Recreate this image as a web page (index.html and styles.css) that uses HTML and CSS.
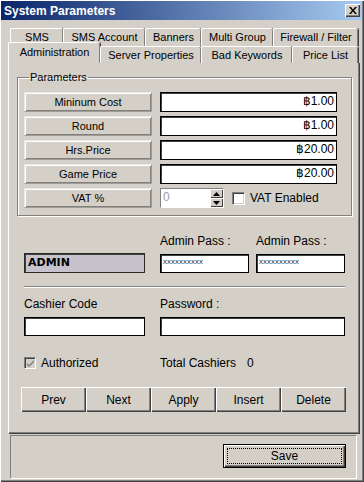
FILE: index.html
```html
<!DOCTYPE html>
<html lang="en">
<head>
    <meta charset="UTF-8">
    <meta name="viewport" content="width=device-width, initial-scale=1.0">
    <title>System Parameters</title>
    <link rel="stylesheet" href="styles.css">
</head>
<body>
    <div class="window">
        <div class="titlebar">
            <span class="title">System Parameters</span>
            <button class="close-btn">
                <svg width="8" height="7" viewBox="0 0 8 7"><path d="M0 0h2l2 2.5L6 0h2L5 3.5 8 7H6L4 4.5 2 7H0l3-3.5z" fill="#000"/></svg>
            </button>
        </div>

        <div class="content">
            <div class="tab-row row-top">
                <div class="tab w-sms">SMS</div>
                <div class="tab w-smsacc">SMS Account</div>
                <div class="tab w-banners">Banners</div>
                <div class="tab w-multi">Multi Group</div>
                <div class="tab w-firewall">Firewall / Filter</div>
            </div>
            <div class="tab-row row-bottom">
                <div class="tab active w-admin">Administration</div>
                <div class="tab w-server">Server Properties</div>
                <div class="tab w-bad">Bad Keywords</div>
                <div class="tab w-price">Price List</div>
            </div>

            <div class="tab-panel">
                <fieldset class="params">
                    <legend>Parameters</legend>
                    <div class="param-grid">
                        <div class="param-label">Mininum Cost</div>
                        <div class="field money">฿1.00</div>
                        <div class="param-label">Round</div>
                        <div class="field money">฿1.00</div>
                        <div class="param-label">Hrs.Price</div>
                        <div class="field money">฿20.00</div>
                        <div class="param-label">Game Price</div>
                        <div class="field money">฿20.00</div>
                        <div class="param-label">VAT %</div>
                        <div class="vat-row">
                            <div class="spin">
                                <div class="spin-value">0</div>
                                <div class="spin-btns">
                                    <div class="spin-btn"><svg width="7" height="4" viewBox="0 0 7 4"><path d="M3.5 0L7 4H0z" fill="#000"/></svg></div>
                                    <div class="spin-btn"><svg width="7" height="4" viewBox="0 0 7 4"><path d="M0 0h7L3.5 4z" fill="#000"/></svg></div>
                                </div>
                            </div>
                            <span class="check"></span>
                            <span>VAT Enabled</span>
                        </div>
                    </div>
                </fieldset>

                <div class="lower">
                    <div class="admin-row">
                        <div class="col-a">
                            <div class="field admin-name">ADMIN</div>
                        </div>
                        <div class="col-b">
                            <div class="caption">Admin Pass :</div>
                            <div class="field pass">xxxxxxxxxx</div>
                        </div>
                        <div class="col-b">
                            <div class="caption">Admin Pass :</div>
                            <div class="field pass">xxxxxxxxxx</div>
                        </div>
                    </div>

                    <div class="separator"></div>

                    <div class="cashier-row">
                        <div class="col-a">
                            <div class="caption">Cashier Code</div>
                            <div class="field"></div>
                        </div>
                        <div class="col-wide">
                            <div class="caption">Password :</div>
                            <div class="field"></div>
                        </div>
                    </div>

                    <div class="status-row">
                        <div class="auth">
                            <span class="check checked">
                                <svg width="9" height="9" viewBox="0 0 9 9"><path d="M1 4l2 2 5-5v2L3 8 1 6z" fill="#808080"/></svg>
                            </span>
                            <span>Authorized</span>
                        </div>
                        <span class="total">Total Cashiers</span>
                        <span class="total-num">0</span>
                    </div>

                    <div class="nav-buttons">
                        <button class="btn">Prev</button>
                        <button class="btn">Next</button>
                        <button class="btn">Apply</button>
                        <button class="btn">Insert</button>
                        <button class="btn">Delete</button>
                    </div>
                </div>
            </div>

            <div class="footer">
                <button class="btn save"><span class="focus">Save</span></button>
            </div>
        </div>
    </div>
</body>
</html>
```

FILE: styles.css
```css
body {
    margin: 0;
    background: #d4d0c8;
    font-family: "Liberation Sans", Arial, sans-serif;
    font-size: 11px;
    color: #000;
}
.window {
    width: 364px;
    height: 482px;
    box-sizing: border-box;
    padding: 1px 2px 2px 1px;
    background: #d4d0c8;
    box-shadow: inset 1px 1px #fff, inset -1px -1px #404040, inset -2px -2px #808080;
}
.titlebar {
    height: 19px;
    display: flex;
    align-items: center;
    justify-content: space-between;
    padding: 0 2px 0 3px;
    background: linear-gradient(to right, #0a246a, #a6caf0);
}
.title {
    color: #fff;
    font-weight: bold;
    font-size: 12px;
}
.close-btn {
    width: 15px;
    height: 13px;
    padding: 0;
    border: none;
    background: #d4d0c8;
    box-shadow: inset 1px 1px #fff, inset -1px -1px #404040, inset -2px -2px #808080;
    display: flex;
    align-items: center;
    justify-content: center;
}
.content {
    padding: 0 2px 0 7px;
}

/* tabs */
.tab-row {
    display: flex;
    padding-left: 2px;
}
.row-top {
    margin-top: 8px;
    height: 18px;
}
.row-bottom {
    height: 16px;
    position: relative;
    z-index: 1;
}
.tab {
    box-sizing: border-box;
    height: 100%;
    border-top: 1px solid #fff;
    border-left: 1px solid #fff;
    border-radius: 2px 2px 0 0;
    box-shadow: inset -1px 0 #808080, 1px 0 #404040;
    background: #d4d0c8;
    text-align: center;
    line-height: 16px;
}
.row-bottom .tab {
    height: 17px;
}
.tab.active {
    height: 21px;
    margin-top: -4px;
    margin-left: -2px;
    line-height: 19px;
}
.w-sms { width: 53px; }
.w-smsacc { width: 82px; }
.w-banners { width: 56px; }
.w-multi { width: 72px; }
.w-firewall { width: 85px; }
.w-admin { width: 92px; }
.w-server { width: 101px; }
.w-bad { width: 91px; }
.w-price { width: 66px; }

.tab-panel {
    box-sizing: border-box;
    height: 371px;
    padding: 8px 7px 0 8px;
    border-top: 1px solid #fff;
    border-left: 1px solid #fff;
    box-shadow: inset -1px -1px #808080, 1px 1px #404040;
    margin-right: 1px;
}

/* parameters group */
.params {
    margin: 0;
    width: 335px;
    height: 145px;
    box-sizing: border-box;
    padding: 9px 0 0 6px;
    border: 1px solid #808080;
    box-shadow: inset 1px 1px #fff, 1px 1px #fff;
}
.params legend {
    padding: 0 1px;
    margin-left: 5px;
    line-height: 12px;
}
.param-grid {
    display: grid;
    grid-template-columns: 128px 177px;
    grid-auto-rows: 20px;
    column-gap: 8px;
    row-gap: 4px;
}
.param-label {
    box-sizing: border-box;
    text-align: center;
    box-shadow: inset 1px 1px #fff, inset -1px -1px #808080;
    border: 1px solid #e8e6e2;
    border-right-color: #a09c94;
    border-bottom-color: #a09c94;
    line-height: 18px;
}
.field {
    box-sizing: border-box;
    height: 20px;
    background: #fff;
    border: 1px solid #000;
    box-shadow: inset 1px 1px #404040;
    line-height: 17px;
    padding: 0 2px;
}
.money {
    text-align: right;
    font-size: 12px;
}
.vat-row {
    display: flex;
    align-items: center;
    gap: 5px;
}
.spin {
    display: flex;
    width: 64px;
    height: 20px;
    box-sizing: border-box;
    background: #fff;
    border: 1px solid #808080;
    border-right-color: #fff;
    border-bottom-color: #fff;
    margin-right: 3px;
}
.spin-value {
    flex: 1;
    color: #a0a0a0;
    font-size: 12px;
    line-height: 17px;
    padding-left: 2px;
}
.spin-btns {
    width: 13px;
    display: flex;
    flex-direction: column;
}
.spin-btn {
    flex: 1;
    background: #d4d0c8;
    box-shadow: inset 1px 1px #fff, inset -1px -1px #404040;
    display: flex;
    align-items: center;
    justify-content: center;
}
.check {
    width: 13px;
    height: 13px;
    box-sizing: border-box;
    background: #fff;
    border: 1px solid #808080;
    border-right-color: #fff;
    border-bottom-color: #fff;
    box-shadow: inset 1px 1px #404040, inset -1px -1px #d4d0c8;
    display: inline-flex;
    align-items: center;
    justify-content: center;
}
.vat-row span:last-child {
    font-size: 12px;
}

/* admin rows */
.lower {
    padding-left: 7px;
}
.admin-row, .cashier-row {
    display: flex;
    gap: 15px;
    align-items: flex-end;
}
.admin-row {
    margin-top: 19px;
}
.admin-row .col-b {
    width: 89px;
}
.admin-row .col-b + .col-b {
    margin-left: -8px;
}
.col-a {
    width: 121px;
}
.col-wide {
    width: 185px;
}
.caption {
    font-size: 12px;
    line-height: 13px;
    margin-bottom: 6px;
}
.admin-name {
    background: #c6c3cc;
    border-color: #2a2a2a;
    font-weight: bold;
    font-family: "DejaVu Sans", sans-serif;
    font-size: 11px;
    padding-left: 3px;
}
.pass {
    height: 19px;
    font-size: 8px;
    line-height: 14px;
    color: #333;
}
.separator {
    margin: 13px 0 10px 0;
    height: 0;
    border-top: 1px solid #808080;
    border-bottom: 1px solid #fff;
    width: 321px;
}
.cashier-row .field {
    height: 19px;
}
.status-row {
    display: flex;
    align-items: center;
    margin-top: 20px;
    font-size: 12px;
}
.auth {
    display: flex;
    align-items: center;
    gap: 5px;
    width: 136px;
}
.check.checked {
    width: 12px;
    height: 12px;
    background: #d4d0c8;
}
.total {
    width: 87px;
}

/* buttons */
.nav-buttons {
    display: flex;
    margin: 17px 0 0 -3px;
}
.btn {
    box-sizing: border-box;
    width: 65px;
    height: 25px;
    padding: 0;
    border: none;
    background: #d4d0c8;
    font-family: "Liberation Sans", Arial, sans-serif;
    font-size: 12px;
    color: #000;
    box-shadow: inset 1px 1px #fff, inset -1px -1px #404040, inset -2px -2px #808080;
}
.footer {
    box-sizing: border-box;
    height: 43px;
    margin: 2px 4px 0 2px;
    border-top: 1px solid #808080;
    border-left: 1px solid #808080;
    box-shadow: 1px 1px #fff;
    display: flex;
    justify-content: flex-end;
    padding: 8px 10px 0 0;
}
.save {
    width: 123px;
    height: 24px;
    border: 1px solid #000;
    box-shadow: inset 1px 1px #fff, inset -1px -1px #404040, inset -2px -2px #808080;
    padding: 3px;
}
.focus {
    display: block;
    height: 100%;
    box-sizing: border-box;
    border: 1px dotted #000;
    line-height: 14px;
}
```
